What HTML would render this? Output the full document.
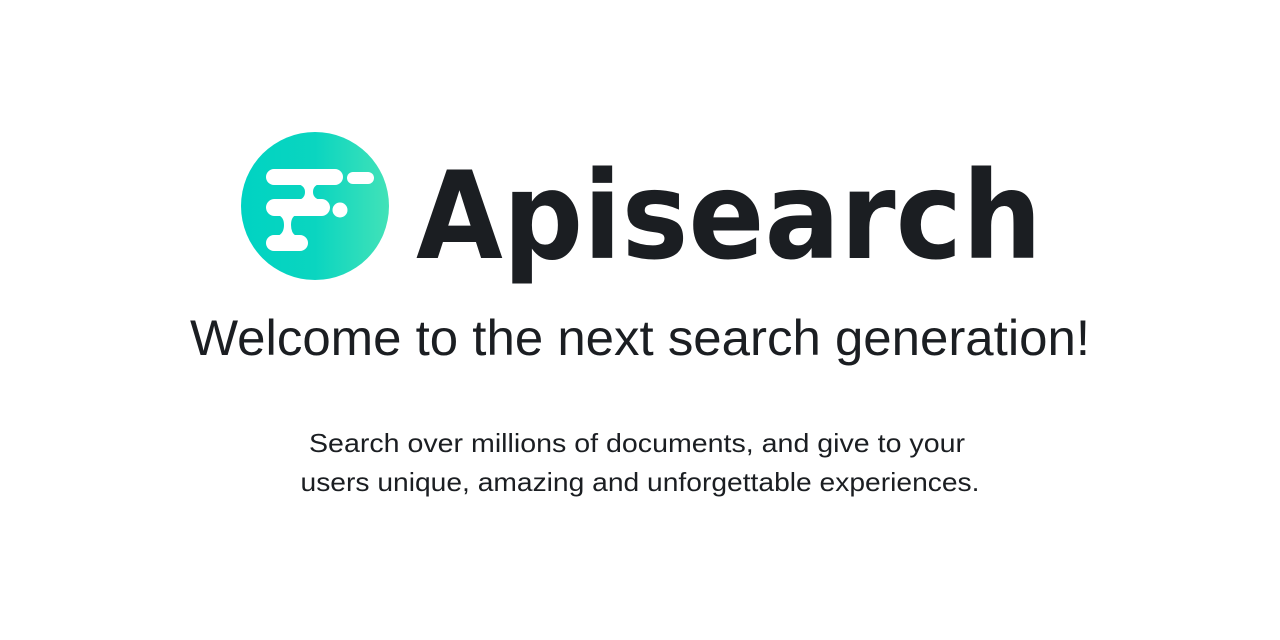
<!DOCTYPE html>
<html><head><meta charset="utf-8"><style>
html,body{margin:0;padding:0;background:#fff;width:1280px;height:640px;overflow:hidden}
</style></head><body>
<svg width="1280" height="640" viewBox="0 0 1280 640" xmlns="http://www.w3.org/2000/svg">
<defs>
<linearGradient id="g" x1="0" x2="1" y1="0" y2="0">
<stop offset="0" stop-color="#00d3c2"/>
<stop offset="0.5" stop-color="#0ad5c0"/>
<stop offset="1" stop-color="#42e2b8"/>
</linearGradient>
</defs>
<circle cx="315" cy="206" r="74" fill="url(#g)"/>
<g fill="#fff">
<rect x="266" y="169" width="77" height="16" rx="8"/>
<rect x="347" y="172" width="27" height="12" rx="6"/>
<rect x="266" y="199" width="64" height="17" rx="8.5"/>
<circle cx="340" cy="210" r="7.5"/>
<rect x="266" y="235" width="42" height="16" rx="8"/>
<path d="M298 184 Q305 186 305 192 Q305 198 299 200 L320 200 Q313 198 313 192 Q313 186 319 184 Z"/>
<path d="M278 215 Q284 217 284 225 Q284 233 278 236 L296 236 Q291 233 291 225 Q291 217 296 215 Z"/>
</g>
<text x="416" y="258" font-family="DejaVu Sans" font-weight="bold" font-size="121" fill="#1b1e22" textLength="626" lengthAdjust="spacingAndGlyphs">Apisearch</text>
<text x="640" y="355" text-anchor="middle" font-family="Liberation Sans, sans-serif" font-size="50" fill="#1b1e22" textLength="900" lengthAdjust="spacingAndGlyphs">Welcome to the next search generation!</text>
<text x="637" y="452" text-anchor="middle" font-family="Liberation Sans, sans-serif" font-size="26" fill="#1b1e22" textLength="656" lengthAdjust="spacingAndGlyphs">Search over millions of documents, and give to your</text>
<text x="640" y="491" text-anchor="middle" font-family="Liberation Sans, sans-serif" font-size="26" fill="#1b1e22" textLength="679" lengthAdjust="spacingAndGlyphs">users unique, amazing and unforgettable experiences.</text>
</svg>
</body></html>
